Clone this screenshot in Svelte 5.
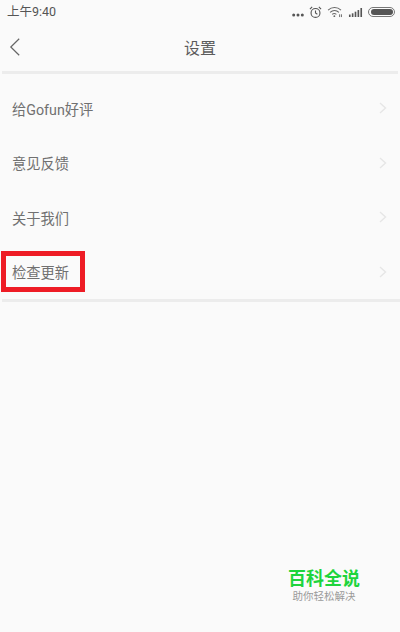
<script lang="ts">
  const rows = [
    { label: '给Gofun好评' },
    { label: '意见反馈' },
    { label: '关于我们' },
    { label: '检查更新', marked: true }
  ];
</script>

<div class="screen">
  <div class="status">
    <span class="time">上午9:40</span>
    <div class="status-icons">
      <svg class="dots" width="12" height="4" viewBox="0 0 12 4" fill="#555"><circle cx="1.7" cy="2" r="1.5"/><circle cx="6" cy="2" r="1.5"/><circle cx="10.3" cy="2" r="1.5"/></svg>
      <svg class="alarm" width="13" height="13" viewBox="0 0 14 14" fill="none" stroke="#555" stroke-width="1.2">
        <circle cx="7" cy="7.5" r="4.8"/>
        <path d="M7 4.8V7.6L9 8.8M1 3.4 3.4 1M13 3.4 10.6 1"/>
      </svg>
      <svg class="wifi" width="16" height="12" viewBox="0 0 17 13" fill="none" stroke="#666" stroke-width="1.1">
        <path d="M1 4.4C5 .8 11 .8 15 4.4M3.2 6.8C6 4.4 10 4.4 12.8 6.8M5.4 9C6.8 7.9 8.6 7.9 10 9"/>
        <circle cx="7.8" cy="11" r="1" fill="#666" stroke="none"/>
        <path d="M13.5 9v3M15.5 9v3" stroke-width="1"/>
      </svg>
      <svg class="signal" width="15" height="9" viewBox="0 0 16 11" fill="#555">
        <rect x="0" y="8" width="2" height="3"/>
        <rect x="3.5" y="6.5" width="2" height="4.5"/>
        <rect x="7" y="4.5" width="2" height="6.5"/>
        <rect x="10.5" y="2.5" width="2" height="8.5"/>
        <rect x="14" y="0" width="2" height="11"/>
      </svg>
      <svg class="battery" width="27" height="10" viewBox="0 0 27 10">
        <rect x=".5" y=".5" width="26" height="9" rx="4.5" fill="none" stroke="#777"/>
        <rect x="3" y="2" width="22" height="6" rx="3" fill="#555"/>
      </svg>
    </div>
  </div>

  <header class="nav">
    <svg class="back" width="12" height="18" viewBox="0 0 12 18" fill="none" stroke="#666" stroke-width="1.2">
      <path d="M10.2 .8 1.8 9l8.4 8.2"/>
    </svg>
    <span class="title">设置</span>
  </header>

  <ul class="list">
    {#each rows as row}
      <li class="row">
        <span class="label" class:marked={row.marked}>{row.label}</span>
        <svg class="chevron" width="8" height="12" viewBox="0 0 8 12" fill="none" stroke="#e6e6e6" stroke-width="1.4">
          <path d="M1 1l5.5 5L1 11"/>
        </svg>
      </li>
    {/each}
  </ul>

  <div class="watermark">
    <span class="wm-name">百科全说</span>
    <span class="wm-sub">助你轻松解决</span>
  </div>
</div>

<style>
  :global(body) {
    margin: 0;
    background: #fafafa;
  }

  .screen {
    position: relative;
    width: 400px;
    height: 632px;
    overflow: hidden;
    display: flex;
    flex-direction: column;
    background: #fafafa;
    font-family: Roboto, "Noto Sans CJK SC", sans-serif;
  }

  .status {
    height: 24px;
    flex: none;
    display: flex;
    align-items: center;
    justify-content: space-between;
    padding: 0 5px 0 7px;
  }

  .time {
    font-size: 12.5px;
    line-height: 24px;
    color: #555;
  }

  .status-icons {
    display: flex;
    align-items: center;
    gap: 5px;
  }

  .dots {
    margin-top: 5px;
  }

  .nav {
    height: 45px;
    flex: none;
    display: flex;
    align-items: center;
    justify-content: center;
    position: relative;
    margin: 0 2px;
    border-bottom: 3px solid #ececec;
    box-sizing: content-box;
    padding-bottom: 2px;
  }

  .back {
    position: absolute;
    left: 7px;
    top: 14px;
  }

  .title {
    font-size: 16px;
    color: #5c5c5c;
  }

  .list {
    list-style: none;
    margin: 0 0 0 2px;
    padding: 7px 0 0;
    border-bottom: 3px solid #ececec;
  }

  .row {
    height: 54.5px;
    display: flex;
    align-items: center;
    justify-content: space-between;
    padding: 0 13px 0 10px;
  }

  .label {
    font-size: 14.25px;
    color: #707070;
    position: relative;
  }

  .marked::after {
    content: "";
    position: absolute;
    left: -11px;
    right: -16px;
    top: -10px;
    bottom: -10px;
    border: 5px solid #ee1c25;
  }

  .watermark {
    position: absolute;
    left: 288px;
    top: 569px;
    width: 72px;
    display: flex;
    flex-direction: column;
    align-items: center;
    font-family: "Liberation Sans", "Noto Sans CJK SC", sans-serif;
  }

  .wm-name {
    font-size: 18px;
    line-height: 21px;
    font-weight: 700;
    color: #1ed43c;
    white-space: nowrap;
  }

  .wm-sub {
    font-size: 10.5px;
    line-height: 13px;
    color: #999;
    white-space: nowrap;
  }
</style>
